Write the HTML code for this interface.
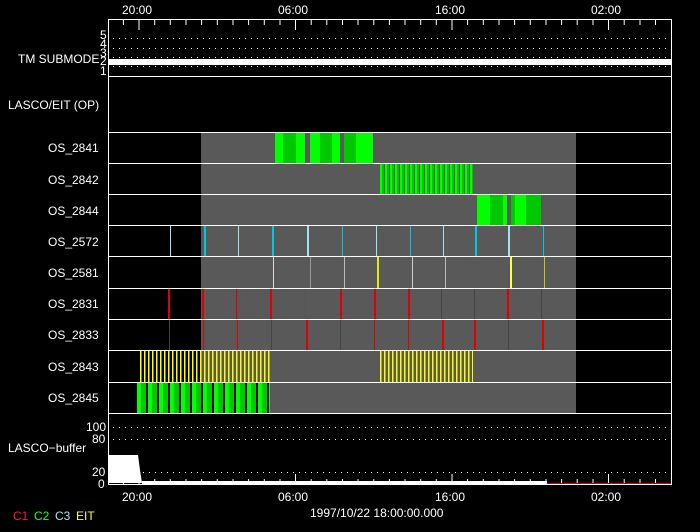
<!DOCTYPE html>
<html><head><meta charset="utf-8"><style>
html,body{margin:0;padding:0;background:#000;}
svg{display:block}
text{font-family:"Liberation Sans",sans-serif;font-size:12px}
</style></head><body>
<svg width="700" height="532" viewBox="0 0 700 532" xmlns="http://www.w3.org/2000/svg" fill="#fff">
<defs>
<pattern id="yl" x="0" y="0" width="4" height="10" patternUnits="userSpaceOnUse"><rect x="0" width="1.5" height="10" fill="#ffff00"/></pattern>
<pattern id="gs" x="0" y="0" width="5" height="10" patternUnits="userSpaceOnUse"><rect x="0" width="2" height="10" fill="#00ff00"/><rect x="2" width="2" height="10" fill="#00c800"/></pattern>
<pattern id="gb" x="137" y="0" width="11" height="10" patternUnits="userSpaceOnUse"><rect x="0" width="4" height="10" fill="#00ff00"/><rect x="4" width="5" height="10" fill="#00c800"/><rect x="9" width="2" height="10" fill="#000"/></pattern>
</defs>
<rect width="700" height="532" fill="#000"/>
<rect x="201" y="132" width="375" height="281" fill="#595959"/>
<text x="122" y="14">20:00</text><text x="278" y="14">06:00</text><text x="435" y="14">16:00</text><text x="591" y="14">02:00</text>
<rect x="108.5" y="19.5" width="563" height="465" fill="none" stroke="#fff"/>
<g stroke="#fff">
<path d="M123.4 20v5M139 20v10M154.7 20v5M170.3 20v5M186 20v5M201.6 20v5M217.3 20v5M233 20v5M248.6 20v5M264.3 20v5M280 20v5M295.5 20v10M311.2 20v5M326.8 20v5M342.5 20v5M358 20v5M373.8 20v5M389.4 20v5M405 20v5M420.7 20v5M436.3 20v5M452 20v10M467.6 20v5M483.3 20v5M499 20v5M514.6 20v5M530.3 20v5M546 20v5M561.6 20v5M577.2 20v5M593 20v5M608.5 20v10M624.2 20v5M640 20v5M655.5 20v5"/>
<path d="M123.4 484v-5M139 484v-10M154.7 484v-5M170.3 484v-5M186 484v-5M201.6 484v-5M217.3 484v-5M233 484v-5M248.6 484v-5M264.3 484v-5M280 484v-5M295.5 484v-10M311.2 484v-5M326.8 484v-5M342.5 484v-5M358 484v-5M373.8 484v-5M389.4 484v-5M405 484v-5M420.7 484v-5M436.3 484v-5M452 484v-10M467.6 484v-5M483.3 484v-5M499 484v-5M514.6 484v-5M530.3 484v-5M546 484v-5M561.6 484v-5M577.2 484v-5M593 484v-5M608.5 484v-10M624.2 484v-5M640 484v-5M655.5 484v-5"/>
</g>
<g stroke="#fff" stroke-dasharray="1 5">
<path d="M113 38.5h558M113 48.5h558M113 57.5h558M113 66.5h558M113 427.5h558M113 439.5h558M113 472.5h558"/>
</g>
<rect x="109" y="59" width="562" height="6" fill="#fff"/>
<g style="font-size:10px"><text x="100" y="39">5</text><text x="100" y="48">4</text><text x="100" y="57">3</text><text x="100" y="65">2</text><text x="100" y="75">1</text></g>
<text x="18" y="63">TM SUBMODE</text>
<text x="8" y="109">LASCO/EIT (OP)</text>
<g stroke="#fff"><path d="M109 76.5h562M109 132.5h562M109 163.5h562M109 194.5h562M109 225.5h562M109 256.5h562M109 288.5h562M109 319.5h562M109 350.5h562M109 382.5h562M109 413.5h562"/></g>
<g><text x="48" y="152">OS_2841</text><text x="48" y="184">OS_2842</text><text x="48" y="215">OS_2844</text><text x="48" y="246">OS_2572</text><text x="48" y="277">OS_2581</text><text x="48" y="308">OS_2831</text><text x="48" y="339">OS_2833</text><text x="48" y="371">OS_2843</text><text x="48" y="402">OS_2845</text></g>
<g><rect x="275" y="133" width="30" height="30" fill="#00ff00"/><rect x="283" y="133" width="13" height="30" fill="#00c800"/>
<rect x="310" y="133" width="30" height="30" fill="#00ff00"/><rect x="320" y="133" width="12" height="30" fill="#00c800"/>
<rect x="344" y="133" width="29" height="30" fill="#00ff00"/><rect x="344" y="133" width="12" height="30" fill="#00c800"/></g>
<rect x="379" y="164" width="94" height="30" fill="url(#gs)"/>
<rect x="477" y="195" width="30" height="30" fill="#00ff00"/><rect x="490" y="195" width="13" height="30" fill="#00c800"/>
<rect x="511" y="195" width="30" height="30" fill="#00ff00"/><rect x="511" y="195" width="4" height="30" fill="#00c800"/><rect x="526" y="195" width="15" height="30" fill="#00c800"/>
<g fill="#00c8e8"><rect x="170" y="226" width="1" height="30" fill="#9fe4f0"/><rect x="204" y="226" width="2" height="30"/><rect x="238" y="226" width="1" height="30" fill="#9fe4f0"/><rect x="272" y="226" width="2" height="30"/><rect x="307" y="226" width="2" height="30" fill="#9fe4f0"/><rect x="342" y="226" width="1" height="30"/><rect x="376" y="226" width="1" height="30" fill="#9fe4f0"/><rect x="410" y="226" width="1" height="30"/><rect x="443" y="226" width="1" height="30" fill="#9fe4f0"/><rect x="475" y="226" width="2" height="30"/><rect x="508" y="226" width="2" height="30" fill="#9fe4f0"/><rect x="543" y="226" width="1" height="30"/></g>
<g><rect x="273" y="257" width="1" height="31" fill="#ddd"/><rect x="310" y="257" width="1" height="31" fill="#999"/><rect x="344" y="257" width="1" height="31" fill="#bbb"/><rect x="377" y="257" width="2" height="31" fill="#e8e800"/><rect x="412" y="257" width="1" height="31" fill="#ccc"/><rect x="445" y="257" width="1" height="31" fill="#bbb"/><rect x="510" y="257" width="2" height="31" fill="#ffff40"/><rect x="544" y="257" width="1" height="31" fill="#c8c800"/></g>
<g fill="#e00000"><rect x="168" y="289" width="2" height="30"/><rect x="202" y="289" width="2" height="30"/><rect x="236" y="289" width="1" height="30"/><rect x="270" y="289" width="2" height="30"/><rect x="305" y="289" width="1" height="30" fill="#555"/><rect x="340" y="289" width="2" height="30"/><rect x="374" y="289" width="2" height="30"/><rect x="408" y="289" width="2" height="30"/><rect x="441" y="289" width="1" height="30" fill="#444"/><rect x="474" y="289" width="1" height="30" fill="#444"/><rect x="507" y="289" width="2" height="30"/><rect x="541" y="289" width="1" height="30" fill="#444"/></g>
<g fill="#e00000"><rect x="169" y="320" width="1" height="30" fill="#444"/><rect x="203" y="320" width="1" height="30"/><rect x="237" y="320" width="1" height="30"/><rect x="271" y="320" width="1" height="30" fill="#444"/><rect x="306" y="320" width="2" height="30"/><rect x="340" y="320" width="1" height="30" fill="#444"/><rect x="374" y="320" width="1" height="30"/><rect x="408" y="320" width="1" height="30"/><rect x="442" y="320" width="2" height="30"/><rect x="474" y="320" width="2" height="30"/><rect x="508" y="320" width="1" height="30" fill="#444"/><rect x="542" y="320" width="2" height="30"/></g>
<rect x="140" y="351" width="130" height="31" fill="url(#yl)"/>
<rect x="379" y="351" width="94" height="31" fill="url(#yl)"/>
<rect x="137" y="383" width="133" height="30" fill="url(#gb)"/>
<path d="M109 455H138L140 470L142 483H109Z" fill="#fff"/>
<rect x="142" y="481" width="405" height="3" fill="#fff"/>
<rect x="547" y="483" width="124" height="1" fill="#c00"/>
<g><text x="86" y="431">100</text><text x="92" y="443">80</text><text x="92" y="476">20</text><text x="98" y="488">0</text></g>
<text x="8" y="452">LASCO−buffer</text>
<text x="122" y="501">20:00</text><text x="278" y="501">06:00</text><text x="435" y="501">16:00</text><text x="591" y="501">02:00</text>
<text x="310" y="517">1997/10/22 18:00:00.000</text>
<g style="font-size:10px"><text x="13" y="520" style="fill:#ff2020">C1</text><text x="34" y="520" style="fill:#20ff20">C2</text><text x="55" y="520" style="fill:#a0e8f0">C3</text><text x="76" y="520" style="fill:#ffff40">EIT</text></g>
</svg>
</body></html>
